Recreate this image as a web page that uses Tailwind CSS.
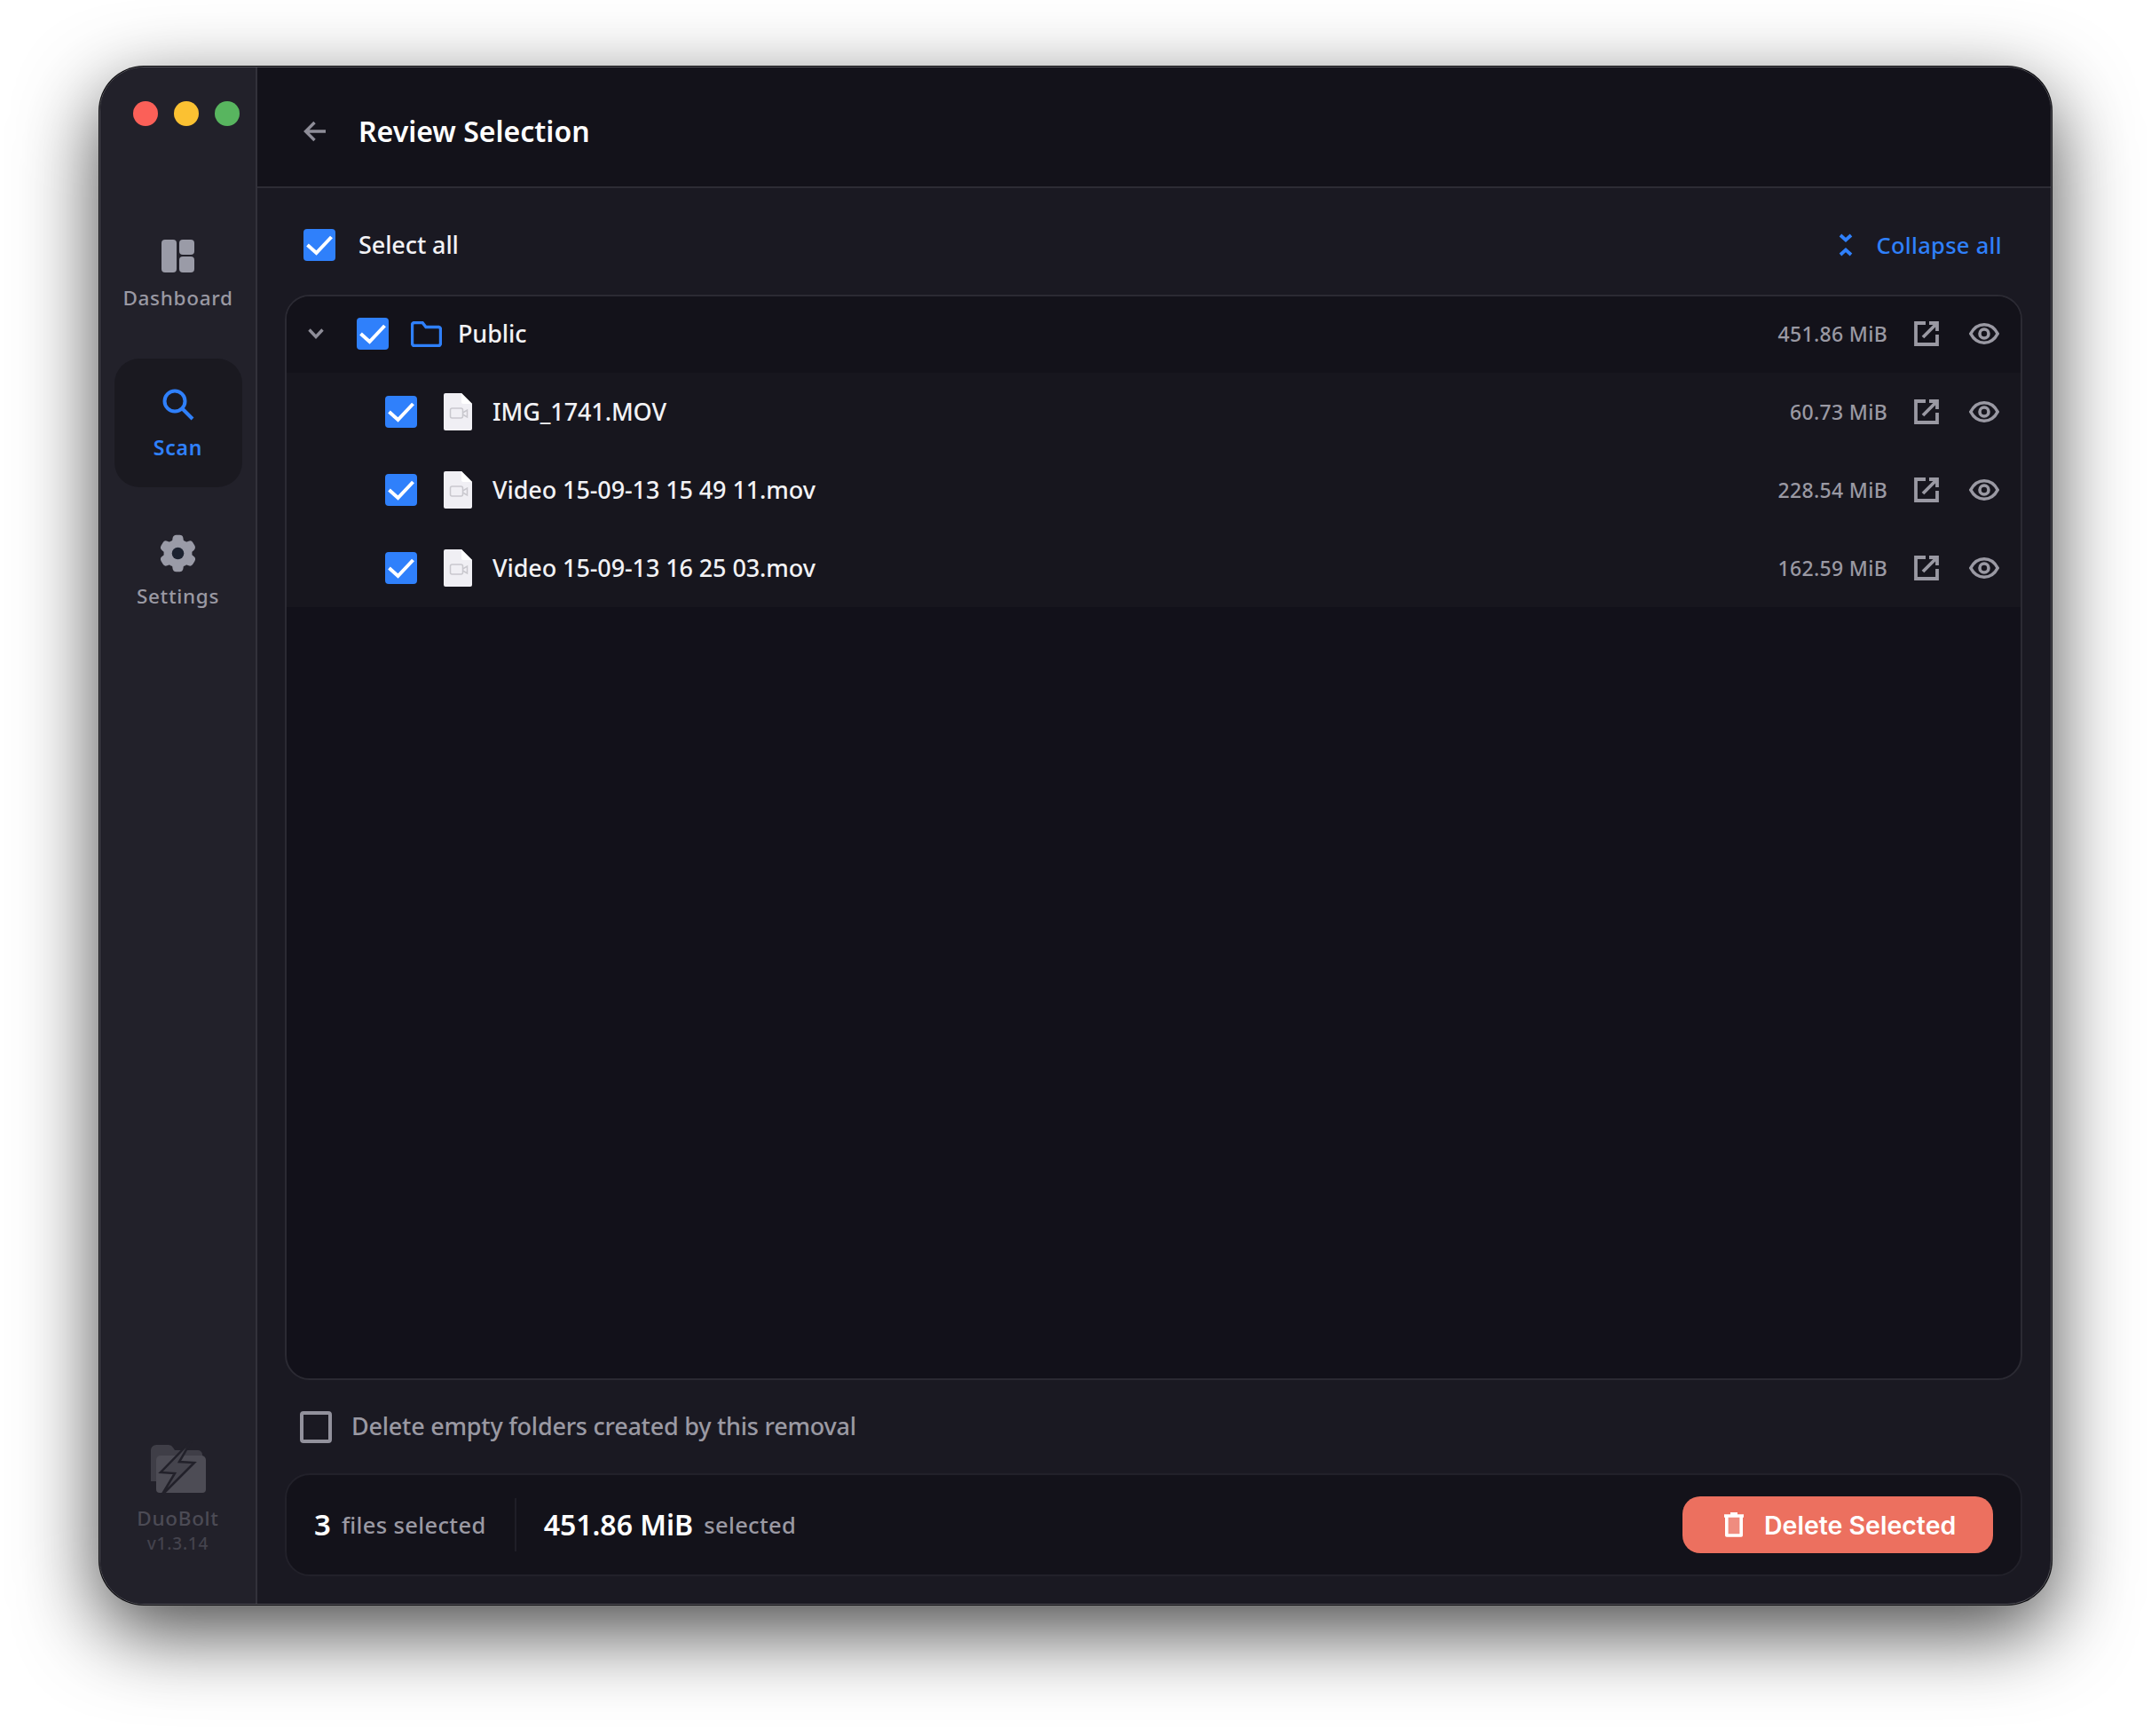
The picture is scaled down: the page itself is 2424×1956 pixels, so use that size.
<!DOCTYPE html>
<html lang="en">
<head>
  <meta charset="UTF-8">
  <title>DuoBolt - Review Selection</title>
  <script src="https://cdn.jsdelivr.net/npm/@tailwindcss/browser@4"></script>
</head>
<body class="bg-white w-[2424px] h-[1956px] overflow-hidden pt-[75px] pl-[112px] font-['Noto_Sans',sans-serif]">

  <!-- Window -->
  <div class="w-[2200px] h-[1733px] flex rounded-[50px] overflow-hidden border border-[#55545b] bg-[#1a1922] shadow-[0_0_0_1px_#0b0b0e,0_30px_90px_rgba(0,0,0,0.72)]">

    <!-- Sidebar -->
    <aside class="w-[177px] flex-none bg-[#22212a] border-r-2 border-[#32313a] flex flex-col items-center">
      <div class="flex gap-[18px] pt-[38px] h-[194px] ml-[18px]">
        <span class="w-[28px] h-[28px] rounded-full bg-[#fb6058]"></span>
        <span class="w-[28px] h-[28px] rounded-full bg-[#fbc132]"></span>
        <span class="w-[28px] h-[28px] rounded-full bg-[#58b55f]"></span>
      </div>

      <div class="flex flex-col items-center h-[134px]">
        <svg width="37" height="37" viewBox="0 0 37 37" fill="#9a9ba7"><rect width="17" height="37" rx="4"/><rect x="20" width="17" height="17" rx="4"/><rect x="20" y="19" width="17" height="18" rx="4"/></svg>
        <span class="mt-[14px] text-[22.5px] leading-[30px] tracking-[0.7px] font-medium text-[#9a99a3]">Dashboard</span>
      </div>

      <div class="w-[144px] h-[145px] rounded-[28px] bg-[#1a1920] flex flex-col items-center pt-[34px]">
        <svg width="36" height="36" viewBox="0 0 36 36" fill="none" stroke="#2f80fb" stroke-width="4"><circle cx="14" cy="14" r="11.5"/><path d="M22.5 22.5L34 34"/></svg>
        <span class="mt-[15px] text-[23px] leading-[30px] tracking-[0.8px] font-semibold text-[#2f80fb]">Scan</span>
      </div>

      <div class="flex flex-col items-center mt-[53px]">
        <svg width="51" height="51" viewBox="0 0 24 24" fill="#9a9ba7" class="-my-[4px]"><path d="M11.078 2.25c-.917 0-1.699.663-1.85 1.567L9.05 4.889c-.02.12-.115.26-.297.348a7.493 7.493 0 0 0-.986.57c-.166.115-.334.126-.45.083L6.3 5.508a1.875 1.875 0 0 0-2.282.819l-.922 1.597a1.875 1.875 0 0 0 .432 2.385l.84.692c.095.078.17.229.154.43a7.598 7.598 0 0 0 0 1.139c.015.2-.059.352-.153.43l-.841.692a1.875 1.875 0 0 0-.432 2.385l.922 1.597a1.875 1.875 0 0 0 2.282.818l1.019-.382c.115-.043.283-.031.45.082.312.214.641.405.985.57.182.088.277.228.297.35l.178 1.071c.151.904.933 1.567 1.85 1.567h1.844c.916 0 1.699-.663 1.85-1.567l.178-1.072c.02-.12.114-.26.297-.349.344-.165.673-.356.985-.57.167-.114.335-.125.45-.082l1.02.382a1.875 1.875 0 0 0 2.28-.819l.923-1.597a1.875 1.875 0 0 0-.432-2.385l-.84-.692c-.095-.078-.17-.229-.154-.43a7.614 7.614 0 0 0 0-1.139c-.016-.2.059-.352.153-.43l.84-.692c.708-.582.891-1.59.433-2.385l-.922-1.597a1.875 1.875 0 0 0-2.282-.818l-1.02.382c-.114.043-.282.031-.449-.083a7.49 7.49 0 0 0-.985-.57c-.183-.087-.277-.227-.297-.348l-.179-1.072a1.875 1.875 0 0 0-1.85-1.567h-1.843z"/><circle cx="12" cy="12" r="3.2" fill="#1c2230"/></svg>
        <span class="mt-[12px] text-[22.5px] leading-[30px] tracking-[0.7px] font-medium text-[#9a99a3]">Settings</span>
      </div>

      <!-- Logo and version -->
      <div class="mt-auto mb-[56px] flex flex-col items-center">
        <svg width="64" height="64" viewBox="0 0 64 64">
          <path d="M2 12a6 6 0 0 1 6-6h14a6 6 0 0 1 5 3l2 3h26a5 5 0 0 1 5 5v30H2z" fill="#3f3e47"/>
          <path d="M8 23a5 5 0 0 1 5-5h46a5 5 0 0 1 5 5v33a4 4 0 0 1-4 4H12a4 4 0 0 1-4-4z" fill="#4d4c55"/>
          <path d="M48 1L13 37l16 1-15 25 37-37-17-1z" fill="#45444d" stroke="#22212a" stroke-width="2.5"/>
        </svg>
        <span class="mt-[11px] text-[22.5px] leading-[28px] tracking-[0.7px] font-medium text-[#4c4b55]">DuoBolt</span>
        <span class="mt-[2px] text-[19px] leading-[24px] tracking-[0.8px] font-medium text-[#44434d]">v1.3.14</span>
      </div>
    </aside>

    <!-- Main -->
    <main class="flex-1 flex flex-col min-w-0">
      <header class="h-[136px] flex-none bg-[#13121a] border-b-2 border-[#2d2c35] flex items-center pl-[52px] pt-[9px]">
        <svg width="26" height="24" viewBox="0 0 26 24" fill="none" stroke="#8e8d98" stroke-width="3.4"><path d="M25 12H2.500M12.500 2L2.500 12l10 10"/></svg>
        <h1 class="ml-[36px] text-[32px] font-semibold text-white">Review Selection</h1>
      </header>

      <div class="h-[120px] flex-none pt-[8px] pl-[52px] pr-[55px] flex items-center">
        <span class="w-[36px] h-[36px] rounded-[4px] bg-[#2f80fb] flex-none"><svg width="36" height="36" viewBox="0 0 36 36" fill="none" stroke="#fff" stroke-width="4"><path d="M4.5 18l10 9L31.5 9"/></svg></span>
        <span class="ml-[26px] text-[27px] font-medium tracking-[-0.1px] text-[#f2f2f5]">Select all</span>
        <svg class="ml-auto" width="16" height="26" viewBox="0 0 16 26" fill="none" stroke="#2f80fb" stroke-width="3.8"><path d="M2 2l6 5.500L14 2M2 24l6-5.500L14 24"/></svg>
        <span class="ml-[26px] pt-[1px] text-[25.5px] font-medium tracking-[0.3px] text-[#2f80fb]">Collapse all</span>
      </div>

      <!-- File tree panel -->
      <section class="h-[1223px] flex-none ml-[31px] mr-[32px] rounded-[28px] border-2 border-[#2b2a33] bg-[#12111a] overflow-hidden">
        <div class="h-[86px] flex items-center bg-[#13121a] pl-[24px] pr-[24px] pb-[2px]">
          <svg class="flex-none" width="18" height="12" viewBox="0 0 18 12" fill="none" stroke="#8e8d98" stroke-width="3.4"><path d="M1.500 1.500L9 9.500l7.500-8"/></svg>
          <span class="ml-[37px] w-[36px] h-[36px] rounded-[4px] bg-[#2f80fb] flex-none"><svg width="36" height="36" viewBox="0 0 36 36" fill="none" stroke="#fff" stroke-width="4"><path d="M4.5 18l10 9L31.5 9"/></svg></span>
          <svg class="ml-[25px] flex-none" width="35" height="29" viewBox="0 0 35 29" fill="none" stroke="#2f80fb" stroke-width="3.4"><path d="M1.500 25V4A2.500 2.500 0 0 1 4 1.500h9l4 5h14.500A2.500 2.500 0 0 1 33.500 9v16a2.500 2.500 0 0 1-2.500 2.500H4A2.500 2.500 0 0 1 1.500 25z"/></svg>
          <span class="ml-[18px] text-[27px] font-medium tracking-[-0.1px] text-[#f2f2f5]">Public</span>
          <span class="ml-auto pt-[1px] text-[23px] tracking-[0.3px] font-medium text-[#9a99a3]">451.86 MiB</span>
          <svg class="ml-[29px] flex-none" width="30" height="30" viewBox="0 0 30 30" fill="none" stroke="#9a99a3" stroke-width="3.8"><path d="M14 3H3v24h24V16M11 19L27 3M18 3h9v9"/></svg>
          <svg class="ml-[33px] flex-none" width="34" height="24" viewBox="0 0 34 24" fill="none" stroke="#9a99a3" stroke-width="3.6"><path d="M1.800 12C5.500 5 10.500 1.800 17 1.800S28.500 5 32.200 12C28.500 19 23.500 22.200 17 22.200S5.500 19 1.800 12z"/><circle cx="17" cy="12" r="5"/></svg>
        </div>

        <div class="bg-[#17161e]">
          <div class="h-[88px] flex items-center pl-[111px] pr-[24px]">
            <span class="w-[36px] h-[36px] rounded-[4px] bg-[#2f80fb] flex-none"><svg width="36" height="36" viewBox="0 0 36 36" fill="none" stroke="#fff" stroke-width="4"><path d="M4.5 18l10 9L31.5 9"/></svg></span>
            <svg class="ml-[30px] flex-none" width="32" height="42" viewBox="0 0 32 42"><path d="M2 0H20L32 12V40a2 2 0 0 1-2 2H2a2 2 0 0 1-2-2V2a2 2 0 0 1 2-2z" fill="#f0eff4"/><path d="M20 0L32 12H22a2 2 0 0 1-2-2z" fill="#fff"/><rect x="7.500" y="17" width="14" height="11" rx="2" fill="none" stroke="#c9c8ce" stroke-width="1.500"/><path d="M21.500 22l5-3v8l-5-3" fill="none" stroke="#c9c8ce" stroke-width="1.500"/></svg>
            <span class="ml-[23px] text-[27px] font-medium tracking-[-0.1px] text-[#f2f2f5]">IMG_1741.MOV</span>
            <span class="ml-auto pt-[1px] text-[23px] tracking-[0.3px] font-medium text-[#9a99a3]">60.73 MiB</span>
            <svg class="ml-[29px] flex-none" width="30" height="30" viewBox="0 0 30 30" fill="none" stroke="#9a99a3" stroke-width="3.8"><path d="M14 3H3v24h24V16M11 19L27 3M18 3h9v9"/></svg>
            <svg class="ml-[33px] flex-none" width="34" height="24" viewBox="0 0 34 24" fill="none" stroke="#9a99a3" stroke-width="3.6"><path d="M1.800 12C5.500 5 10.500 1.800 17 1.800S28.500 5 32.200 12C28.500 19 23.500 22.200 17 22.200S5.500 19 1.800 12z"/><circle cx="17" cy="12" r="5"/></svg>
          </div>
          <div class="h-[88px] flex items-center pl-[111px] pr-[24px]">
            <span class="w-[36px] h-[36px] rounded-[4px] bg-[#2f80fb] flex-none"><svg width="36" height="36" viewBox="0 0 36 36" fill="none" stroke="#fff" stroke-width="4"><path d="M4.5 18l10 9L31.5 9"/></svg></span>
            <svg class="ml-[30px] flex-none" width="32" height="42" viewBox="0 0 32 42"><path d="M2 0H20L32 12V40a2 2 0 0 1-2 2H2a2 2 0 0 1-2-2V2a2 2 0 0 1 2-2z" fill="#f0eff4"/><path d="M20 0L32 12H22a2 2 0 0 1-2-2z" fill="#fff"/><rect x="7.500" y="17" width="14" height="11" rx="2" fill="none" stroke="#c9c8ce" stroke-width="1.500"/><path d="M21.500 22l5-3v8l-5-3" fill="none" stroke="#c9c8ce" stroke-width="1.500"/></svg>
            <span class="ml-[23px] text-[27px] font-medium tracking-[-0.1px] text-[#f2f2f5]">Video 15-09-13 15 49 11.mov</span>
            <span class="ml-auto pt-[1px] text-[23px] tracking-[0.3px] font-medium text-[#9a99a3]">228.54 MiB</span>
            <svg class="ml-[29px] flex-none" width="30" height="30" viewBox="0 0 30 30" fill="none" stroke="#9a99a3" stroke-width="3.8"><path d="M14 3H3v24h24V16M11 19L27 3M18 3h9v9"/></svg>
            <svg class="ml-[33px] flex-none" width="34" height="24" viewBox="0 0 34 24" fill="none" stroke="#9a99a3" stroke-width="3.6"><path d="M1.800 12C5.500 5 10.500 1.800 17 1.800S28.500 5 32.200 12C28.500 19 23.500 22.200 17 22.200S5.500 19 1.800 12z"/><circle cx="17" cy="12" r="5"/></svg>
          </div>
          <div class="h-[88px] flex items-center pl-[111px] pr-[24px]">
            <span class="w-[36px] h-[36px] rounded-[4px] bg-[#2f80fb] flex-none"><svg width="36" height="36" viewBox="0 0 36 36" fill="none" stroke="#fff" stroke-width="4"><path d="M4.5 18l10 9L31.5 9"/></svg></span>
            <svg class="ml-[30px] flex-none" width="32" height="42" viewBox="0 0 32 42"><path d="M2 0H20L32 12V40a2 2 0 0 1-2 2H2a2 2 0 0 1-2-2V2a2 2 0 0 1 2-2z" fill="#f0eff4"/><path d="M20 0L32 12H22a2 2 0 0 1-2-2z" fill="#fff"/><rect x="7.500" y="17" width="14" height="11" rx="2" fill="none" stroke="#c9c8ce" stroke-width="1.500"/><path d="M21.500 22l5-3v8l-5-3" fill="none" stroke="#c9c8ce" stroke-width="1.500"/></svg>
            <span class="ml-[23px] text-[27px] font-medium tracking-[-0.1px] text-[#f2f2f5]">Video 15-09-13 16 25 03.mov</span>
            <span class="ml-auto pt-[1px] text-[23px] tracking-[0.3px] font-medium text-[#9a99a3]">162.59 MiB</span>
            <svg class="ml-[29px] flex-none" width="30" height="30" viewBox="0 0 30 30" fill="none" stroke="#9a99a3" stroke-width="3.8"><path d="M14 3H3v24h24V16M11 19L27 3M18 3h9v9"/></svg>
            <svg class="ml-[33px] flex-none" width="34" height="24" viewBox="0 0 34 24" fill="none" stroke="#9a99a3" stroke-width="3.6"><path d="M1.800 12C5.500 5 10.500 1.800 17 1.800S28.500 5 32.200 12C28.500 19 23.500 22.200 17 22.200S5.500 19 1.800 12z"/><circle cx="17" cy="12" r="5"/></svg>
          </div>
        </div>
      </section>

      <div class="h-[105px] flex-none pl-[48px] flex items-center">
        <span class="w-[36px] h-[36px] rounded-[4px] border-[4px] border-[#92919c] flex-none"></span>
        <span class="ml-[22px] text-[27px] font-medium tracking-[-0.24px] text-[#9a99a3]">Delete empty folders created by this removal</span>
      </div>

      <!-- Selection summary -->
      <footer class="h-[116px] flex-none ml-[31px] mr-[32px] rounded-[28px] border-2 border-[#22212a] bg-[#13121a] flex items-center pl-[31px] pr-[31px]">
        <span class="text-[33px] font-semibold text-white">3</span>
        <span class="ml-[12px] text-[25.5px] font-medium tracking-[0.35px] text-[#9a99a3]">files selected</span>
        <span class="ml-[32px] w-[2px] h-[60px] bg-[#1f1e27]"></span>
        <span class="ml-[31px] text-[32px] font-semibold text-white">451.86 MiB</span>
        <span class="ml-[12px] text-[25.5px] font-medium tracking-[0.35px] text-[#9a99a3]">selected</span>
        <button class="ml-auto w-[350px] h-[64px] rounded-[20px] bg-[#ec705f] flex items-center pl-[46px]">
          <svg width="24" height="28" viewBox="0 0 24 28" fill="none" stroke="#fff" stroke-width="3.6" stroke-linejoin="round"><path d="M3.800 4V26H20.200V4" fill="#ffffff33"/><path d="M1 4h22M8 1.800h8"/></svg>
          <span class="ml-[22px] pt-[3px] font-['Inter',sans-serif] text-[28.5px] font-semibold text-white">Delete Selected</span>
        </button>
      </footer>
    </main>
  </div>
</body>
</html>
